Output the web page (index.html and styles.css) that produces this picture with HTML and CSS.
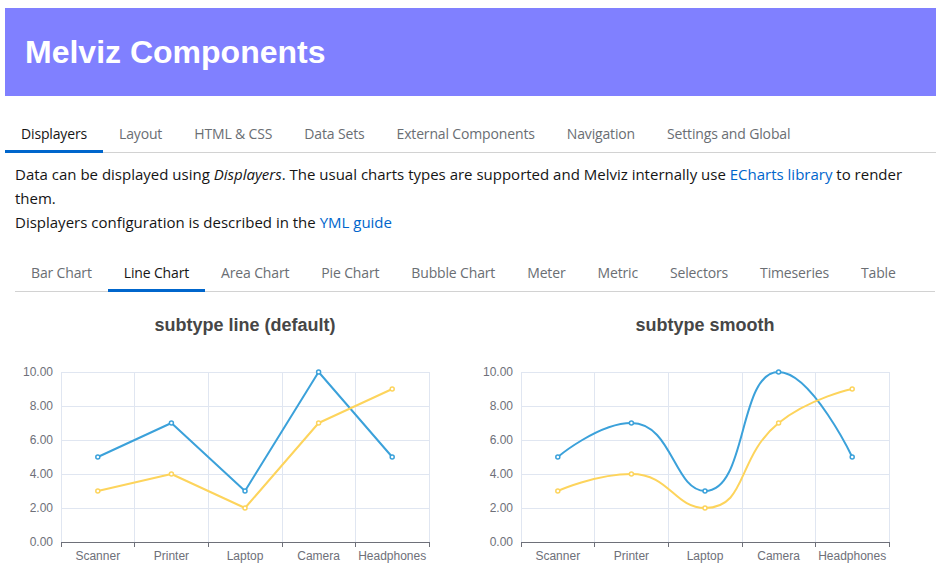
FILE: index.html
```html
<!DOCTYPE html>
<html lang="en">
<head>
<meta charset="utf-8">
<title>Melviz Components</title>
<link rel="stylesheet" href="styles.css">
</head>
<body>
<div class="page">
  <header class="banner">
    <h1 class="banner-title">Melviz Components</h1>
  </header>
  <nav class="tabs main-tabs">
    <a class="tab active">Displayers</a>
    <a class="tab">Layout</a>
    <a class="tab">HTML &amp; CSS</a>
    <a class="tab">Data Sets</a>
    <a class="tab">External Components</a>
    <a class="tab">Navigation</a>
    <a class="tab">Settings and Global</a>
  </nav>
  <main class="content">
    <p class="intro">Data can be displayed using <em>Displayers</em>. The usual charts types are supported and Melviz internally use <a class="link">ECharts library</a> to render them.<br>Displayers configuration is described in the <a class="link">YML guide</a></p>
    <nav class="tabs sub-tabs">
      <a class="tab">Bar Chart</a>
      <a class="tab active">Line Chart</a>
      <a class="tab">Area Chart</a>
      <a class="tab">Pie Chart</a>
      <a class="tab">Bubble Chart</a>
      <a class="tab">Meter</a>
      <a class="tab">Metric</a>
      <a class="tab">Selectors</a>
      <a class="tab">Timeseries</a>
      <a class="tab">Table</a>
    </nav>
    <section class="charts">
      <svg class="chart" width="460" height="275" viewBox="0 0 460 275">
        <text class="chart-title" x="230" y="19">subtype line (default)</text>
        <g class="grid-lines">
          <path d="M46 60.5H414M46 94.5H414M46 128.5H414M46 162.5H414M46 196.5H414"/>
          <path d="M46.5 60V230M119.5 60V230M193.5 60V230M267.5 60V230M340.5 60V230M414.5 60V230"/>
        </g>
        <path class="axis" d="M46 230.5H415M46.5 230V235M119.5 230V235M193.5 230V235M267.5 230V235M340.5 230V235M414.5 230V235"/>
        <g class="y-labels">
          <text x="38" y="64">10.00</text>
          <text x="38" y="98">8.00</text>
          <text x="38" y="132">6.00</text>
          <text x="38" y="166">4.00</text>
          <text x="38" y="200">2.00</text>
          <text x="38" y="234">0.00</text>
        </g>
        <g class="x-labels">
          <text x="82.8" y="248">Scanner</text>
          <text x="156.4" y="248">Printer</text>
          <text x="230" y="248">Laptop</text>
          <text x="303.6" y="248">Camera</text>
          <text x="377.2" y="248">Headphones</text>
        </g>
        <path class="series blue" d="M82.8 145L156.4 111L230 179L303.6 60L377.2 145"/>
        <path class="series yellow" d="M82.8 179L156.4 162L230 196L303.6 111L377.2 77"/>
        <g class="dots blue">
          <circle cx="82.8" cy="145" r="2"/><circle cx="156.4" cy="111" r="2"/><circle cx="230" cy="179" r="2"/><circle cx="303.6" cy="60" r="2"/><circle cx="377.2" cy="145" r="2"/>
        </g>
        <g class="dots yellow">
          <circle cx="82.8" cy="179" r="2"/><circle cx="156.4" cy="162" r="2"/><circle cx="230" cy="196" r="2"/><circle cx="303.6" cy="111" r="2"/><circle cx="377.2" cy="77" r="2"/>
        </g>
      </svg>
      <svg class="chart" width="460" height="275" viewBox="0 0 460 275">
        <text class="chart-title" x="230" y="19">subtype smooth</text>
        <g class="grid-lines">
          <path d="M46 60.5H414M46 94.5H414M46 128.5H414M46 162.5H414M46 196.5H414"/>
          <path d="M46.5 60V230M119.5 60V230M193.5 60V230M267.5 60V230M340.5 60V230M414.5 60V230"/>
        </g>
        <path class="axis" d="M46 230.5H415M46.5 230V235M119.5 230V235M193.5 230V235M267.5 230V235M340.5 230V235M414.5 230V235"/>
        <g class="y-labels">
          <text x="38" y="64">10.00</text>
          <text x="38" y="98">8.00</text>
          <text x="38" y="132">6.00</text>
          <text x="38" y="166">4.00</text>
          <text x="38" y="200">2.00</text>
          <text x="38" y="234">0.00</text>
        </g>
        <g class="x-labels">
          <text x="82.8" y="248">Scanner</text>
          <text x="156.4" y="248">Printer</text>
          <text x="230" y="248">Laptop</text>
          <text x="303.6" y="248">Camera</text>
          <text x="377.2" y="248">Headphones</text>
        </g>
        <path class="series blue" d="M82.8 145C82.8 145 123.48 111 156.4 111C197.09 111 199.29 179 230 179C272.89 179 262.78 60 303.6 60C336.4 60 377.2 145 377.2 145"/>
        <path class="series yellow" d="M82.8 179C82.8 179 120.9 162 156.4 162C194.5 162 199.16 196 230 196C272.77 196 260.84 145.58 303.6 111C334.43 86.07 377.2 77 377.2 77"/>
        <g class="dots blue">
          <circle cx="82.8" cy="145" r="2"/><circle cx="156.4" cy="111" r="2"/><circle cx="230" cy="179" r="2"/><circle cx="303.6" cy="60" r="2"/><circle cx="377.2" cy="145" r="2"/>
        </g>
        <g class="dots yellow">
          <circle cx="82.8" cy="179" r="2"/><circle cx="156.4" cy="162" r="2"/><circle cx="230" cy="196" r="2"/><circle cx="303.6" cy="111" r="2"/><circle cx="377.2" cy="77" r="2"/>
        </g>
      </svg>
    </section>
  </main>
</div>
</body>
</html>
```
FILE: styles.css
```css
html, body {
  margin: 0;
  padding: 0;
  overflow: hidden;
  background: #fff;
}

body {
  font-family: "Open Sans", "Liberation Sans", sans-serif;
  font-size: 14px;
  color: #151515;
}

.page {
  padding: 8px 0 0 5px;
}

.banner {
  height: 88px;
  background: #8080ff;
  display: flex;
  align-items: center;
  padding-left: 20px;
}

.banner-title {
  margin: 0;
  font-family: "Liberation Sans", Arial, sans-serif;
  font-weight: bold;
  font-size: 32px;
  color: #fff;
}

.tabs {
  display: flex;
  border-bottom: 1px solid #d2d2d2;
}

.main-tabs {
  padding-top: 18px;
}

.tab {
  position: relative;
  padding: 8px 16px 6px;
  line-height: 24px;
  color: #6a6e73;
  letter-spacing: -0.15px;
  white-space: nowrap;
  cursor: pointer;
}

.tab.active {
  color: #151515;
}

.tab.active::after {
  content: "";
  position: absolute;
  left: 0;
  right: 0;
  bottom: -1px;
  height: 3px;
  background: #0066cc;
}

.content {
  padding: 0 1px 0 10px;
}

.intro {
  margin: 9px 0 0;
  font-size: 15px;
  line-height: 24px;
}

.link {
  color: #0066cc;
  text-decoration: none;
}

.sub-tabs {
  margin-top: 19px;
}

.charts {
  display: grid;
  grid-template-columns: 460px 460px;
  margin-top: 20px;
}

.chart {
  display: block;
  font-family: "Liberation Sans", Arial, sans-serif;
}

.chart-title {
  font-size: 18px;
  font-weight: bold;
  fill: #464646;
  text-anchor: middle;
}

.grid-lines path {
  stroke: #e0e6f1;
  stroke-width: 1;
  fill: none;
}

.axis {
  stroke: #6e7079;
  stroke-width: 1;
  fill: none;
}

.y-labels text {
  font-size: 12px;
  fill: #6e7079;
  text-anchor: end;
}

.x-labels text {
  font-size: 12px;
  fill: #6e7079;
  text-anchor: middle;
}

.series {
  fill: none;
  stroke-width: 2;
  stroke-linejoin: bevel;
}

.series.blue { stroke: #3ba1da; }
.series.yellow { stroke: #fdd45c; }

.dots circle {
  fill: #fff;
  stroke-width: 1.5;
}

.dots.blue circle { stroke: #3ba1da; }
.dots.yellow circle { stroke: #fdd45c; }
```
